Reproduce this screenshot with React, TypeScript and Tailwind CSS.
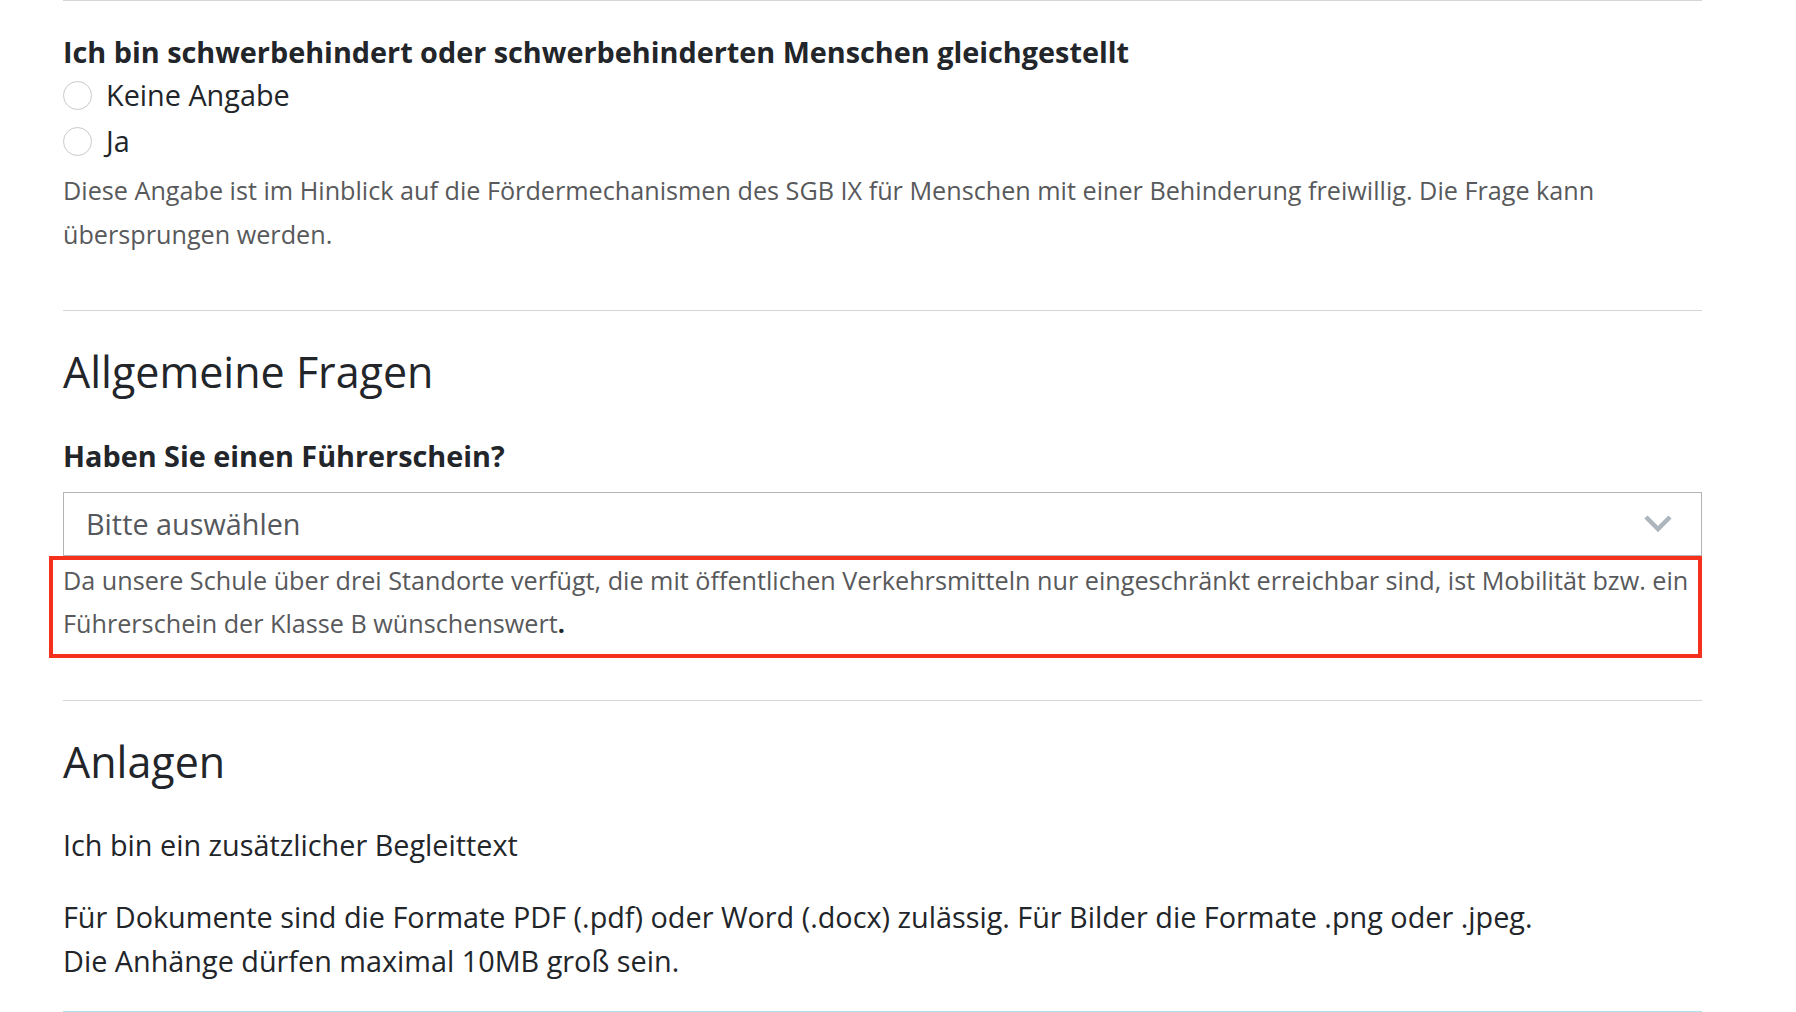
import React from "react";

function Radio({ label }: { label: string }) {
  return (
    <label className="flex h-[46px] items-center gap-[14px]">
      <span className="h-[29px] w-[29px] shrink-0 rounded-full border border-[#c9c9c9] bg-white" />
      <span className="text-[28.8px] leading-[46px] text-[#222529]">{label}</span>
    </label>
  );
}

function Divider({ className = "" }: { className?: string }) {
  return <div className={`h-px w-full bg-[#d6d6d6] ${className}`} />;
}

export default function App() {
  return (
    <div className="min-h-screen bg-white" style={{ fontFamily: '"Open Sans", "Noto Sans", sans-serif' }}>
      <div className="ml-[63px] w-[1639px]">
        <Divider />

        <section className="pt-[31px]">
          <h3 className="text-[28.8px] font-bold leading-[40px] text-[#222529]">
            Ich bin schwerbehindert oder schwerbehinderten Menschen gleichgestellt
          </h3>
          <Radio label="Keine Angabe" />
          <Radio label="Ja" />
          <p className="mt-[4px] text-[25.2px] leading-[44px] text-[#58595b]">
            Diese Angabe ist im Hinblick auf die Fördermechanismen des SGB IX für Menschen mit einer Behinderung
            freiwillig. Die Frage kann übersprungen werden.
          </p>
        </section>

        <Divider className="mt-[54px]" />

        <section>
          <h2 className="mt-[33px] text-[43px] leading-[56px] text-[#222529]">Allgemeine Fragen</h2>
          <h3 className="mt-[36px] text-[28.8px] font-bold leading-[40px] text-[#222529]">
            Haben Sie einen Führerschein?
          </h3>
          <button
            type="button"
            className="mt-[16px] flex h-[64px] w-full items-center justify-between border border-[#b4b4b8] bg-white pl-[22px] pr-[29px] text-left"
          >
            <span className="text-[28.8px] text-[#55585c]">Bitte auswählen</span>
            <svg width="28" height="18" viewBox="0 0 28 18" fill="none">
              <polyline points="2,2 14,14 26,2" stroke="#adb5bd" strokeWidth="4.5" />
            </svg>
          </button>
          <div className="-ml-[14px] border-4 border-[#f5311d] pb-[9px] pl-[10px]">
            <p className="-mt-[1px] text-[25.2px] leading-[43px] text-[#58595b]">
              Da unsere Schule über drei Standorte verfügt, die mit öffentlichen Verkehrsmitteln nur eingeschränkt
              erreichbar sind, ist Mobilität bzw. ein Führerschein der Klasse B wünschenswert
              <strong className="text-[#222529]">.</strong>
            </p>
          </div>
        </section>

        <Divider className="mt-[42px]" />

        <section>
          <h2 className="mt-[33px] text-[43px] leading-[56px] text-[#222529]">Anlagen</h2>
          <p className="mt-[33px] text-[28.8px] leading-[44px] text-[#222529]">Ich bin ein zusätzlicher Begleittext</p>
          <p className="mt-[28px] text-[28.8px] leading-[44px] text-[#222529]">
            Für Dokumente sind die Formate PDF (.pdf) oder Word (.docx) zulässig. Für Bilder die Formate .png oder
            .jpeg.
            <br />
            Die Anhänge dürfen maximal 10MB groß sein.
          </p>
        </section>

        <div className="mt-[28px] h-px w-full bg-[#a8e2ea]" />
      </div>
    </div>
  );
}
